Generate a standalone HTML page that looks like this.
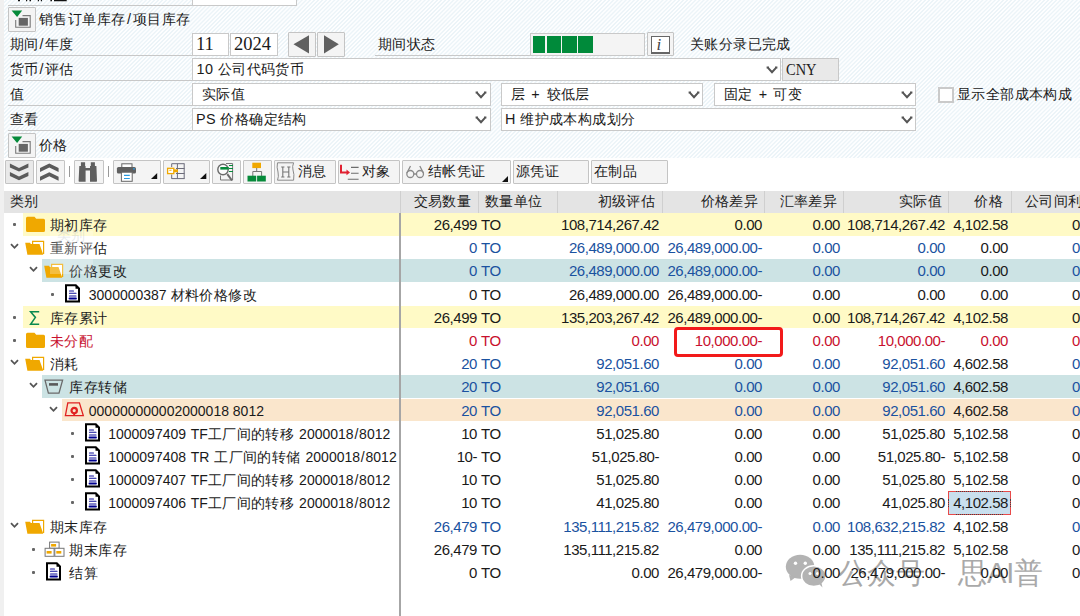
<!DOCTYPE html>
<html><head><meta charset="utf-8">
<style>
*{margin:0;padding:0;box-sizing:border-box}
html,body{width:1080px;height:616px;overflow:hidden}
body{position:relative;background:#fff;font-family:"Liberation Sans",sans-serif;color:#1a1a1a}
.abs,.t,.bg,.ic,.bul,.box,.ln,.btn{position:absolute}
.t{white-space:nowrap;line-height:23px;font-size:14px}
.lbl{font-size:14px;font-weight:400}
.bg{left:0;right:0}
.bul{width:3px;height:3px;background:#666;border-radius:1px}
.stripe{position:absolute;left:4px;top:0;width:1076px;height:158px;background:repeating-linear-gradient(135deg,#fdfeff 0px,#fdfeff 1.0px,#ecf4f8 1.5px,#ecf4f8 2.4px,#fdfeff 2.9px)}
.strip{position:absolute;left:0;top:0;width:4px;height:616px;background:#f0f0f0}
.ln{height:1px;background:#c8c8c8}
.box{background:#fff;border:1px solid #c9c9c9}
.btn{background:#f4f4f4;border:1px solid #c4c4c4;border-radius:1px}
.ft{position:absolute;white-space:nowrap;font-size:14.4px;line-height:22px;font-weight:350;letter-spacing:.4px}
.chev{position:absolute}
.hdr{position:absolute;left:4px;top:191px;width:1076px;height:22px;background:#e4e4e4}
.hs{position:absolute;top:191px;width:1px;height:22px;background:#cfcfcf}
.ht{position:absolute;top:189.5px;line-height:22px;font-size:14.4px;white-space:nowrap;color:#222;font-weight:350;letter-spacing:.3px}
.r{text-align:right}
.c{letter-spacing:.4px;font-size:14.4px}
.d{font-size:15px;letter-spacing:-.45px}
</style></head><body>
<div class="stripe"></div>
<div class="strip"></div>

<!-- top partial row -->
<svg class="ic" style="left:0;top:0" width="80" height="3" viewBox="0 0 80 3"><path d="M18 0H20V1.2H18Z M26 0H27.2V1.2H26Z M29.5 0H31V1.2H29.5Z M37.8 0H39V1.2H37.8Z M40.8 0H42V1.2H40.8Z M50.4 0H52V1.2H50.4Z M54 0H66.7V1.3H54Z" fill="#111"/></svg>
<div class="ln" style="left:8px;top:5px;width:184px"></div>
<div class="box" style="left:192px;top:-10px;width:105px;height:16px"></div>

<!-- button row 1 -->
<div class="btn" style="left:8px;top:7px;width:28px;height:25px"></div>
<svg class="ic" style="left:8px;top:7px" width="28" height="25" viewBox="0 0 28 25"><path d="M14.5 8.6 H22.2 V20.3 H7.7 V13" fill="none" stroke="#7a7a7a" stroke-width="1.1"/><rect x="10.7" y="10.9" width="9.2" height="7.8" fill="#666"/><path d="M3.6 3.6 H14.2 L9.1 10Z" fill="#068a3a"/></svg>
<div class="ft" style="left:39px;top:8px">销售订单库存<span style="margin:0 1.5px">/</span>项目库存</div>

<!-- row 期间/年度 -->
<div class="ft" style="left:10px;top:33px">期间<span style="margin:0 .7px">/</span>年度</div>
<div class="ln" style="left:8px;top:55px;width:184px"></div>
<div class="box" style="left:192px;top:33px;width:37px;height:23px"></div>
<div class="box" style="left:230px;top:33px;width:48px;height:23px"></div>
<div class="t" style="left:196px;top:33px;font-family:'Liberation Serif',serif;font-size:18.5px;line-height:23px">11</div>
<div class="t" style="left:234px;top:33px;font-family:'Liberation Serif',serif;font-size:18.5px;line-height:23px">2024</div>
<div class="btn" style="left:288px;top:32px;width:28px;height:25px"></div>
<div class="btn" style="left:317px;top:32px;width:28px;height:25px"></div>
<svg class="ic" style="left:293px;top:35px" width="20" height="19" viewBox="0 0 20 19"><path d="M16 0.2 V18.4 L0.5 9.3Z" fill="#606060"/></svg>
<svg class="ic" style="left:323px;top:35px" width="20" height="19" viewBox="0 0 20 19"><path d="M1 0.2 V18.4 L15.8 9.3Z" fill="#606060"/></svg>
<div class="ft" style="left:378px;top:33px">期间状态</div>
<div class="ln" style="left:375px;top:55px;width:155px"></div>
<div class="box" style="left:530px;top:33px;width:115px;height:23px;background:#f4f4f4"></div>
<div class="abs" style="left:533px;top:36px;width:12px;height:17px;background:#008a3a"></div>
<div class="abs" style="left:546.5px;top:36px;width:14.5px;height:17px;background:#008a3a"></div>
<div class="abs" style="left:562px;top:36px;width:15px;height:17px;background:#008a3a"></div>
<div class="abs" style="left:578px;top:36px;width:14.5px;height:17px;background:#008a3a"></div>
<div class="btn" style="left:647px;top:32px;width:27px;height:24px"></div>
<div class="abs" style="left:651px;top:36px;width:19px;height:18px;border:1px solid #666;border-right-width:1.5px;border-bottom-width:2px;background:#fff"></div>
<div class="t" style="left:656.5px;top:33px;font-family:'Liberation Serif',serif;font-style:italic;font-size:17px;color:#444">i</div>
<div class="ft" style="left:690px;top:33px">关账分录已完成</div>

<!-- row 货币/评估 -->
<div class="ft" style="left:10px;top:58px">货币<span style="margin:0 .7px">/</span>评估</div>
<div class="ln" style="left:8px;top:80px;width:184px"></div>
<div class="box" style="left:192px;top:58px;width:589px;height:23px"></div>
<div class="ft" style="left:196.5px;top:58px">10 公司代码货币</div>
<div class="box" style="left:782px;top:58px;width:57px;height:23px;background:#e9e9e9"></div>
<div class="t" style="left:786px;top:58px;font-family:'Liberation Serif',serif;font-size:17px;color:#222;transform:scaleX(.85);transform-origin:left">CNY</div>

<!-- row 值 -->
<div class="ft" style="left:10px;top:83px">值</div>
<div class="ln" style="left:8px;top:105px;width:184px"></div>
<div class="box" style="left:192px;top:83px;width:299px;height:23px"></div>
<div class="ft" style="left:202px;top:83px">实际值</div>
<div class="box" style="left:501px;top:83px;width:202px;height:23px"></div>
<div class="ft" style="left:510.5px;top:83px;word-spacing:2px">层 + 较低层</div>
<div class="box" style="left:714px;top:83px;width:202px;height:23px"></div>
<div class="ft" style="left:724px;top:83px;word-spacing:1.5px">固定 + 可变</div>
<div class="abs" style="left:938px;top:87px;width:16px;height:16px;border:2px solid #cacaca;background:#fff"></div>
<div class="ft" style="left:957px;top:83px">显示全部成本构成</div>

<!-- row 查看 -->
<div class="ft" style="left:10px;top:108px">查看</div>
<div class="ln" style="left:8px;top:130px;width:184px"></div>
<div class="box" style="left:192px;top:108px;width:299px;height:23px"></div>
<div class="ft" style="left:196px;top:108px">PS 价格确定结构</div>
<div class="box" style="left:501px;top:108px;width:415px;height:23px"></div>
<div class="ft" style="left:505px;top:108px">H 维护成本构成划分</div>

<!-- chevrons -->
<svg class="chev" style="left:765.5px;top:65.5px" width="12" height="8" viewBox="0 0 12 8"><path d="M0.6 1.4 H3 M9 1.4 H11.4 M1.8 1.6 L6 6.2 L10.2 1.6" fill="none" stroke="#555" stroke-width="2"/></svg>
<svg class="chev" style="left:474.5px;top:90.5px" width="12" height="8" viewBox="0 0 12 8"><path d="M0.6 1.4 H3 M9 1.4 H11.4 M1.8 1.6 L6 6.2 L10.2 1.6" fill="none" stroke="#555" stroke-width="2"/></svg>
<svg class="chev" style="left:687.5px;top:90.5px" width="12" height="8" viewBox="0 0 12 8"><path d="M0.6 1.4 H3 M9 1.4 H11.4 M1.8 1.6 L6 6.2 L10.2 1.6" fill="none" stroke="#555" stroke-width="2"/></svg>
<svg class="chev" style="left:900.5px;top:90.5px" width="12" height="8" viewBox="0 0 12 8"><path d="M0.6 1.4 H3 M9 1.4 H11.4 M1.8 1.6 L6 6.2 L10.2 1.6" fill="none" stroke="#555" stroke-width="2"/></svg>
<svg class="chev" style="left:474.5px;top:115.5px" width="12" height="8" viewBox="0 0 12 8"><path d="M0.6 1.4 H3 M9 1.4 H11.4 M1.8 1.6 L6 6.2 L10.2 1.6" fill="none" stroke="#555" stroke-width="2"/></svg>
<svg class="chev" style="left:900.5px;top:115.5px" width="12" height="8" viewBox="0 0 12 8"><path d="M0.6 1.4 H3 M9 1.4 H11.4 M1.8 1.6 L6 6.2 L10.2 1.6" fill="none" stroke="#555" stroke-width="2"/></svg>

<!-- button row 价格 -->
<div class="btn" style="left:8px;top:133px;width:28px;height:25px"></div>
<svg class="ic" style="left:8px;top:133px" width="28" height="25" viewBox="0 0 28 25"><path d="M14.5 8.6 H22.2 V20.3 H7.7 V13" fill="none" stroke="#7a7a7a" stroke-width="1.1"/><rect x="10.7" y="10.9" width="9.2" height="7.8" fill="#666"/><path d="M3.6 3.6 H14.2 L9.1 10Z" fill="#068a3a"/></svg>
<div class="ft" style="left:39px;top:134px">价格</div>

<!-- toolbar -->
<div class="btn" style="left:5px;top:160px;width:29px;height:24px;background:#e9e9e9"></div>
<div class="btn" style="left:36px;top:160px;width:29px;height:24px"></div>
<div class="abs" style="left:69px;top:166px;width:1px;height:11px;background:#999"></div>
<div class="btn" style="left:74px;top:160px;width:30px;height:24px"></div>
<div class="abs" style="left:108px;top:166px;width:1px;height:11px;background:#999"></div>
<div class="btn" style="left:113px;top:160px;width:48px;height:24px"></div>
<div class="btn" style="left:163px;top:160px;width:47px;height:24px"></div>
<div class="btn" style="left:212px;top:160px;width:29px;height:24px"></div>
<div class="btn" style="left:243px;top:160px;width:29px;height:24px"></div>
<div class="btn" style="left:274px;top:160px;width:62px;height:24px"></div>
<div class="btn" style="left:338px;top:160px;width:62px;height:24px"></div>
<div class="btn" style="left:402px;top:160px;width:109px;height:24px"></div>
<div class="btn" style="left:513px;top:160px;width:76px;height:24px"></div>
<div class="btn" style="left:591px;top:160px;width:77px;height:24px"></div>
<!-- toolbar icons -->
<svg class="ic" style="left:0;top:156px" width="70" height="30" viewBox="0 156 70 30"><path d="M9.9 163.6 L19 168 L28.4 163.6 V167.6 L19 171.6 L9.9 167.6Z M9.9 172.1 L19 176.5 L28.4 172.1 V176.1 L19 180.3 L9.9 176.1Z" fill="#5a5a5a"/><path d="M40 168 L49.3 163.6 L58.6 168 V172 L49.3 167.6 L40 172Z M40 176.7 L49.3 172.3 L58.6 176.7 V180.7 L49.3 176.3 L40 180.7Z" fill="#5a5a5a"/></svg>
<svg class="ic" style="left:78px;top:162px" width="20" height="20" viewBox="0 0 20 20"><path d="M2.9 0.2 H7.1 V4 H7.6 V19.7 H1.3 Q0.6 19.7 0.6 19 L1.3 4 H2.9Z M12.8 0.2 H16.9 V4 H18.4 L19 19 Q19 19.7 18.4 19.7 H12 V4 H12.8Z M7.6 6 H12 V8.5 H7.6Z" fill="#5f5f5f"/></svg>
<svg class="ic" style="left:110px;top:156px" width="104" height="30" viewBox="110 156 104 30"><rect x="121.8" y="163.8" width="10.2" height="4" fill="#fff" stroke="#666" stroke-width="1"/><rect x="116.9" y="167" width="19.1" height="6.5" rx="1.6" fill="#606060"/><circle cx="134" cy="168.8" r=".9" fill="#2a9ae0"/><rect x="121.4" y="172.2" width="10.8" height="9.1" fill="#fff" stroke="#666" stroke-width="1"/><path d="M124 175.4H129.8M124 178.5H129.8" stroke="#2a9ae0" stroke-width="1.2"/><path d="M157.2 172.9 V178.9 H151Z" fill="#111"/>
<path d="M177.4 163.7 V178.8 M184.2 163.7 V178.8 M171.7 163.7 V167 M171.7 174.5 V178.8 M171.7 163.7 H184.5 M176 168.5 H184.5 M176 173.5 H184.5 M171.7 178.6 H184.5" stroke="#6c6c7a" stroke-width="1"/><rect x="167.6" y="168.3" width="6.2" height="5.3" fill="#fff" stroke="#f0a800" stroke-width="1.3"/><path d="M169.3 170.3 H171.5" stroke="#f0a800" stroke-width=".9"/><rect x="173.8" y="169.4" width="4.2" height="2.8" fill="#f0a800"/><path d="M206.3 173 V179 H200Z" fill="#111"/></svg>
<svg class="ic" style="left:208px;top:156px" width="104" height="30" viewBox="208 156 104 30"><path d="M226 163.5 H232.6 V180 H220.5 V175.5" fill="none" stroke="#777" stroke-width="1"/><path d="M229 165.5 H233 M229 168.5 H233 M229 171.5 H233" stroke="#068a3a" stroke-width="1.1"/><circle cx="223" cy="169.5" r="5.2" fill="#fff" fill-opacity=".6" stroke="#6a6a6a" stroke-width="1.4"/><rect x="220.3" y="167" width="8.4" height="2.6" fill="#068a3a"/><path d="M227.3 174.2 L232 180.5" stroke="#6a6a6a" stroke-width="2"/>
<rect x="252.3" y="162.7" width="8.7" height="5.4" fill="#f0a800"/><path d="M256.7 168 V171.5 M252.8 176 V171.5 H261.6 V176" fill="none" stroke="#777" stroke-width="1"/><rect x="247.5" y="175.7" width="8.7" height="5.8" fill="#068a3a"/><rect x="257.1" y="175.7" width="8.7" height="5.8" fill="#068a3a"/>
<path d="M277.5 162.8 H293.6 Q292 166.5 293 170 Q294.5 174 293.6 180.2 H277.5 Q279 176.5 278 172 Q276.5 167 277.5 162.8Z" fill="none" stroke="#8a8a8a" stroke-width="1"/><path d="M282.8 167 V177 M288.8 167 V177 M282.8 172 H288.8 M281.2 167 H284.4 M287.2 167 H290.4 M281.2 177 H284.4 M287.2 177 H290.4" stroke="#757575" stroke-width="1.1"/></svg>
<div class="t" style="left:298px;top:159px;font-size:14.4px;line-height:24px;font-weight:350;letter-spacing:.4px">消息</div>
<svg class="ic" style="left:334px;top:156px" width="104" height="30" viewBox="334 156 104 30"><path d="M341 164.7 V172.4 H347" fill="none" stroke="#e02030" stroke-width="2"/><path d="M346.5 169.6 L350 172.4 L346.5 175.2Z" fill="#e02030"/><path d="M351 167.4 H358.6 M351 173.3 H358.6 M347.8 179.3 H358.6" stroke="#6c6c6c" stroke-width="1.1"/>
<circle cx="410.3" cy="174" r="3.5" fill="none" stroke="#8a8a8a" stroke-width="1.3"/><circle cx="420" cy="174" r="3.5" fill="none" stroke="#8a8a8a" stroke-width="1.3"/><path d="M406.9 173 L410.5 166 M423.4 173 L419.8 166 M413.8 174 H416.5" fill="none" stroke="#8a8a8a" stroke-width="1.3"/></svg>
<div class="t" style="left:362px;top:159px;font-size:14.4px;line-height:24px;font-weight:350;letter-spacing:.4px">对象</div>
<div class="t" style="left:428px;top:159px;font-size:14.4px;line-height:24px;font-weight:350;letter-spacing:.4px">结帐凭证</div>
<svg class="ic" style="left:502px;top:176px" width="6" height="6" viewBox="0 0 6 6"><path d="M6 0V6H0Z" fill="#111"/></svg>
<div class="t" style="left:516px;top:159px;font-size:14.4px;line-height:24px;font-weight:350;letter-spacing:.4px">源凭证</div>
<div class="t" style="left:594px;top:159px;font-size:14.4px;line-height:24px;font-weight:350;letter-spacing:.4px">在制品</div>

<!-- header -->
<div class="hdr"></div>
<div class="ht" style="left:10px">类别</div>
<div class="hs" style="left:400px"></div>
<div class="hs" style="left:478px"></div>
<div class="hs" style="left:557px"></div>
<div class="hs" style="left:662px"></div>
<div class="hs" style="left:764px"></div>
<div class="hs" style="left:843px"></div>
<div class="hs" style="left:948px"></div>
<div class="hs" style="left:1011px"></div>
<div class="ht r" style="right:609px">交易数量</div>
<div class="ht" style="left:485px">数量单位</div>
<div class="ht r" style="right:425px">初级评估</div>
<div class="ht r" style="right:322px">价格差异</div>
<div class="ht r" style="right:243px">汇率差异</div>
<div class="ht r" style="right:138px">实际值</div>
<div class="ht r" style="right:77px">价格</div>
<div class="ht" style="left:1025px">公司间利润</div>

<!-- watermark -->
<svg class="ic" style="left:780px;top:550px" width="50" height="40" viewBox="0 0 50 40"><ellipse cx="20.1" cy="16.8" rx="14.3" ry="12" fill="#b3b3b3"/><path d="M9 25 L10.5 31 L16 27Z" fill="#b3b3b3"/><circle cx="15.5" cy="13.3" r="1.7" fill="#fff"/><circle cx="25.3" cy="13.3" r="1.7" fill="#fff"/><ellipse cx="33.8" cy="26.1" rx="12.2" ry="10.4" fill="#b3b3b3" stroke="#fff" stroke-width="1.5"/><path d="M38 33 L42.5 37.5 L41 31Z" fill="#b3b3b3"/><circle cx="30" cy="23.4" r="1.5" fill="#fff"/><circle cx="37.5" cy="23.4" r="1.5" fill="#fff"/></svg>
<div class="t" style="left:838px;top:557px;font-size:29px;line-height:33px;color:#a9a9a9;font-weight:350">公众号</div>
<div class="t" style="left:958px;top:557px;font-size:29px;line-height:33px;color:#a9a9a9;font-weight:350">思AI普</div>
<div class="bg" style="left:23.0px;top:213px;height:23px;background:#fffac6"></div>
<div class="bul" style="left:12.6px;top:223px"></div>
<svg class="ic" style="left:25.0px;top:215px" width="22" height="20" viewBox="0 0 22 20"><path d="M1 3.2 Q1 1.7 2.5 1.7 H9.5 L11.2 3.8 H18.5 Q20 3.8 20 5.3 V15.4 Q20 16.9 18.5 16.9 H2.5 Q1 16.9 1 15.4 Z" fill="#f0a800"/></svg>
<div class="t lbl" style="left:50.0px;top:213.5px;color:#1a1a1a"><span class="c">期初库存</span></div>
<div class="t d r" style="right:603px;top:213px;color:#1a1a1a">26,499</div>
<div class="t d" style="left:481px;top:213px;color:#1a1a1a">TO</div>
<div class="t d r" style="right:421px;top:213px;color:#1a1a1a">108,714,267.42</div>
<div class="t d r" style="right:318px;top:213px;color:#1a1a1a">0.00</div>
<div class="t d r" style="right:240px;top:213px;color:#1a1a1a">0.00</div>
<div class="t d r" style="right:135px;top:213px;color:#1a1a1a">108,714,267.42</div>
<div class="t d r" style="right:72px;top:213px;color:#1a1a1a">4,102.58</div>
<div class="t d r" style="right:0px;top:213px;color:#1a1a1a">0</div>
<svg class="ic" style="left:10.0px;top:243px" width="9" height="7" viewBox="0 0 9 7"><path d="M1 1.2 L4.5 4.8 L8 1.2" fill="none" stroke="#555" stroke-width="1.8"/></svg>
<svg class="ic" style="left:25.0px;top:238px" width="22" height="20" viewBox="0 0 22 20"><path d="M7.6 14 V3.4 H18.6 V16" fill="#fff" stroke="#f0a800" stroke-width="1.2"/><path d="M0.2 4.8 H5 L5.8 6 H14.5 L18.3 16.8 H2.4 Z" fill="#f0a800"/></svg>
<div class="t lbl" style="left:50.0px;top:236.5px;color:#1a1a1a"><span class="c">重新评估</span></div>
<div class="t d r" style="right:603px;top:236px;color:#1a52a0">0</div>
<div class="t d" style="left:481px;top:236px;color:#1a52a0">TO</div>
<div class="t d r" style="right:421px;top:236px;color:#1a52a0">26,489,000.00</div>
<div class="t d r" style="right:318px;top:236px;color:#1a52a0">26,489,000.00-</div>
<div class="t d r" style="right:240px;top:236px;color:#1a52a0">0.00</div>
<div class="t d r" style="right:135px;top:236px;color:#1a52a0">0.00</div>
<div class="t d r" style="right:72px;top:236px;color:#1a1a1a">0.00</div>
<div class="t d r" style="right:0px;top:236px;color:#1a52a0">0</div>
<div class="bg" style="left:42.4px;top:259px;height:23px;background:#cce3e4"></div>
<svg class="ic" style="left:29.4px;top:266px" width="9" height="7" viewBox="0 0 9 7"><path d="M1 1.2 L4.5 4.8 L8 1.2" fill="none" stroke="#555" stroke-width="1.8"/></svg>
<svg class="ic" style="left:44.4px;top:261px" width="22" height="20" viewBox="0 0 22 20"><path d="M7.6 14 V3.4 H18.6 V16" fill="#fff" stroke="#f0a800" stroke-width="1.2"/><path d="M0.2 4.8 H5 L5.8 6 H14.5 L18.3 16.8 H2.4 Z" fill="#f0a800"/></svg>
<div class="t lbl" style="left:69.4px;top:259.5px;color:#1a1a1a"><span class="c">价格更改</span></div>
<div class="t d r" style="right:603px;top:259px;color:#1a52a0">0</div>
<div class="t d" style="left:481px;top:259px;color:#1a52a0">TO</div>
<div class="t d r" style="right:421px;top:259px;color:#1a52a0">26,489,000.00</div>
<div class="t d r" style="right:318px;top:259px;color:#1a52a0">26,489,000.00-</div>
<div class="t d r" style="right:240px;top:259px;color:#1a52a0">0.00</div>
<div class="t d r" style="right:135px;top:259px;color:#1a52a0">0.00</div>
<div class="t d r" style="right:72px;top:259px;color:#1a1a1a">0.00</div>
<div class="t d r" style="right:0px;top:259px;color:#1a52a0">0</div>
<div class="bul" style="left:51.4px;top:293px"></div>
<svg class="ic" style="left:65.1px;top:284px" width="17" height="20" viewBox="0 0 17 20"><path d="M1 1.2 H10.8 L14 4.4 V17.5 H1Z" fill="#fff" stroke="#000" stroke-width="2"/><path d="M10.5 1 V4.8 H14.2Z" fill="#000"/><path d="M4.5 7H8.5M4.5 9.2H11M4.5 12H11" stroke="#10109a" stroke-width="1.1" stroke-linecap="round"/><path d="M4.5 14.5H11" stroke="#000090" stroke-width="1.8" stroke-linecap="round"/></svg>
<div class="t lbl" style="left:88.8px;top:283.5px;color:#1a1a1a">3000000387 <span class="c">材料价格修改</span></div>
<div class="t d r" style="right:603px;top:283px;color:#1a1a1a">0</div>
<div class="t d" style="left:481px;top:283px;color:#1a1a1a">TO</div>
<div class="t d r" style="right:421px;top:283px;color:#1a1a1a">26,489,000.00</div>
<div class="t d r" style="right:318px;top:283px;color:#1a1a1a">26,489,000.00-</div>
<div class="t d r" style="right:240px;top:283px;color:#1a1a1a">0.00</div>
<div class="t d r" style="right:135px;top:283px;color:#1a1a1a">0.00</div>
<div class="t d r" style="right:72px;top:283px;color:#1a1a1a">0.00</div>
<div class="t d r" style="right:0px;top:283px;color:#1a1a1a">0</div>
<div class="bg" style="left:23.0px;top:306px;height:22px;background:#fffac6"></div>
<div class="bul" style="left:12.6px;top:316px"></div>
<svg class="ic" style="left:25.0px;top:308px" width="22" height="20" viewBox="0 0 22 20"><path d="M14.2 3.7 H5.6 L10.4 9.4 L5.6 16.2 H14.2" fill="none" stroke="#0a8a50" stroke-width="1.5"/></svg>
<div class="t lbl" style="left:50.0px;top:306.5px;color:#1a1a1a"><span class="c">库存累计</span></div>
<div class="t d r" style="right:603px;top:306px;color:#1a1a1a">26,499</div>
<div class="t d" style="left:481px;top:306px;color:#1a1a1a">TO</div>
<div class="t d r" style="right:421px;top:306px;color:#1a1a1a">135,203,267.42</div>
<div class="t d r" style="right:318px;top:306px;color:#1a1a1a">26,489,000.00-</div>
<div class="t d r" style="right:240px;top:306px;color:#1a1a1a">0.00</div>
<div class="t d r" style="right:135px;top:306px;color:#1a1a1a">108,714,267.42</div>
<div class="t d r" style="right:72px;top:306px;color:#1a1a1a">4,102.58</div>
<div class="t d r" style="right:0px;top:306px;color:#1a1a1a">0</div>
<div class="bul" style="left:12.6px;top:339px"></div>
<svg class="ic" style="left:25.0px;top:331px" width="22" height="20" viewBox="0 0 22 20"><path d="M1 3.2 Q1 1.7 2.5 1.7 H9.5 L11.2 3.8 H18.5 Q20 3.8 20 5.3 V15.4 Q20 16.9 18.5 16.9 H2.5 Q1 16.9 1 15.4 Z" fill="#f0a800"/></svg>
<div class="t lbl" style="left:50.0px;top:329.5px;color:#c8102e"><span class="c">未分配</span></div>
<div class="t d r" style="right:603px;top:329px;color:#c8102e">0</div>
<div class="t d" style="left:481px;top:329px;color:#c8102e">TO</div>
<div class="t d r" style="right:421px;top:329px;color:#c8102e">0.00</div>
<div class="t d r" style="right:318px;top:329px;color:#c8102e">10,000.00-</div>
<div class="t d r" style="right:240px;top:329px;color:#c8102e">0.00</div>
<div class="t d r" style="right:135px;top:329px;color:#c8102e">10,000.00-</div>
<div class="t d r" style="right:72px;top:329px;color:#c8102e">0.00</div>
<div class="t d r" style="right:0px;top:329px;color:#c8102e">0</div>
<svg class="ic" style="left:10.0px;top:359px" width="9" height="7" viewBox="0 0 9 7"><path d="M1 1.2 L4.5 4.8 L8 1.2" fill="none" stroke="#555" stroke-width="1.8"/></svg>
<svg class="ic" style="left:25.0px;top:354px" width="22" height="20" viewBox="0 0 22 20"><path d="M7.6 14 V3.4 H18.6 V16" fill="#fff" stroke="#f0a800" stroke-width="1.2"/><path d="M0.2 4.8 H5 L5.8 6 H14.5 L18.3 16.8 H2.4 Z" fill="#f0a800"/></svg>
<div class="t lbl" style="left:50.0px;top:352.5px;color:#1a1a1a"><span class="c">消耗</span></div>
<div class="t d r" style="right:603px;top:352px;color:#1a52a0">20</div>
<div class="t d" style="left:481px;top:352px;color:#1a52a0">TO</div>
<div class="t d r" style="right:421px;top:352px;color:#1a52a0">92,051.60</div>
<div class="t d r" style="right:318px;top:352px;color:#1a52a0">0.00</div>
<div class="t d r" style="right:240px;top:352px;color:#1a52a0">0.00</div>
<div class="t d r" style="right:135px;top:352px;color:#1a52a0">92,051.60</div>
<div class="t d r" style="right:72px;top:352px;color:#1a1a1a">4,602.58</div>
<div class="t d r" style="right:0px;top:352px;color:#1a52a0">0</div>
<div class="bg" style="left:42.4px;top:375px;height:23px;background:#cce3e4"></div>
<svg class="ic" style="left:29.4px;top:382px" width="9" height="7" viewBox="0 0 9 7"><path d="M1 1.2 L4.5 4.8 L8 1.2" fill="none" stroke="#555" stroke-width="1.8"/></svg>
<svg class="ic" style="left:44.4px;top:377px" width="22" height="20" viewBox="0 0 22 20"><path d="M1 3.2 H18.6 L15 16.2 H4.4Z" fill="none" stroke="#6a6a6a" stroke-width="1.3"/><path d="M5 7.4 H14" stroke="#5a5a5a" stroke-width="2.6"/></svg>
<div class="t lbl" style="left:69.4px;top:375.5px;color:#1a1a1a"><span class="c">库存转储</span></div>
<div class="t d r" style="right:603px;top:375px;color:#1a52a0">20</div>
<div class="t d" style="left:481px;top:375px;color:#1a52a0">TO</div>
<div class="t d r" style="right:421px;top:375px;color:#1a52a0">92,051.60</div>
<div class="t d r" style="right:318px;top:375px;color:#1a52a0">0.00</div>
<div class="t d r" style="right:240px;top:375px;color:#1a52a0">0.00</div>
<div class="t d r" style="right:135px;top:375px;color:#1a52a0">92,051.60</div>
<div class="t d r" style="right:72px;top:375px;color:#1a1a1a">4,602.58</div>
<div class="t d r" style="right:0px;top:375px;color:#1a52a0">0</div>
<div class="bg" style="left:61.8px;top:399px;height:22px;background:#fae6cc"></div>
<svg class="ic" style="left:48.8px;top:406px" width="9" height="7" viewBox="0 0 9 7"><path d="M1 1.2 L4.5 4.8 L8 1.2" fill="none" stroke="#555" stroke-width="1.8"/></svg>
<svg class="ic" style="left:63.8px;top:401px" width="22" height="20" viewBox="0 0 22 20"><path d="M3.8 1.8 H15.4 L19.3 14.6 H1.4Z" fill="none" stroke="#e02020" stroke-width="1.3"/><circle cx="10.2" cy="9.6" r="2.7" fill="none" stroke="#e02020" stroke-width="2.2"/><path d="M10.2 12 V14" stroke="#e02020" stroke-width="1.8"/></svg>
<div class="t lbl" style="left:88.8px;top:399.5px;color:#1a1a1a">000000000002000018 8012</div>
<div class="t d r" style="right:603px;top:399px;color:#1a52a0">20</div>
<div class="t d" style="left:481px;top:399px;color:#1a52a0">TO</div>
<div class="t d r" style="right:421px;top:399px;color:#1a52a0">92,051.60</div>
<div class="t d r" style="right:318px;top:399px;color:#1a52a0">0.00</div>
<div class="t d r" style="right:240px;top:399px;color:#1a52a0">0.00</div>
<div class="t d r" style="right:135px;top:399px;color:#1a52a0">92,051.60</div>
<div class="t d r" style="right:72px;top:399px;color:#1a1a1a">4,602.58</div>
<div class="t d r" style="right:0px;top:399px;color:#1a52a0">0</div>
<div class="bul" style="left:70.8px;top:432px"></div>
<svg class="ic" style="left:84.49999999999999px;top:423px" width="17" height="20" viewBox="0 0 17 20"><path d="M1 1.2 H10.8 L14 4.4 V17.5 H1Z" fill="#fff" stroke="#000" stroke-width="2"/><path d="M10.5 1 V4.8 H14.2Z" fill="#000"/><path d="M4.5 7H8.5M4.5 9.2H11M4.5 12H11" stroke="#10109a" stroke-width="1.1" stroke-linecap="round"/><path d="M4.5 14.5H11" stroke="#000090" stroke-width="1.8" stroke-linecap="round"/></svg>
<div class="t lbl" style="left:108.19999999999999px;top:422.5px;color:#1a1a1a;word-spacing:1px">1000097409 TF<span class="c">工厂间的转移</span> 2000018<span style="margin:0 .8px">/</span>8012</div>
<div class="t d r" style="right:603px;top:422px;color:#1a1a1a">10</div>
<div class="t d" style="left:481px;top:422px;color:#1a1a1a">TO</div>
<div class="t d r" style="right:421px;top:422px;color:#1a1a1a">51,025.80</div>
<div class="t d r" style="right:318px;top:422px;color:#1a1a1a">0.00</div>
<div class="t d r" style="right:240px;top:422px;color:#1a1a1a">0.00</div>
<div class="t d r" style="right:135px;top:422px;color:#1a1a1a">51,025.80</div>
<div class="t d r" style="right:72px;top:422px;color:#1a1a1a">5,102.58</div>
<div class="t d r" style="right:0px;top:422px;color:#1a1a1a">0</div>
<div class="bul" style="left:70.8px;top:455px"></div>
<svg class="ic" style="left:84.49999999999999px;top:446px" width="17" height="20" viewBox="0 0 17 20"><path d="M1 1.2 H10.8 L14 4.4 V17.5 H1Z" fill="#fff" stroke="#000" stroke-width="2"/><path d="M10.5 1 V4.8 H14.2Z" fill="#000"/><path d="M4.5 7H8.5M4.5 9.2H11M4.5 12H11" stroke="#10109a" stroke-width="1.1" stroke-linecap="round"/><path d="M4.5 14.5H11" stroke="#000090" stroke-width="1.8" stroke-linecap="round"/></svg>
<div class="t lbl" style="left:108.19999999999999px;top:445.5px;color:#1a1a1a;word-spacing:1px">1000097408 TR <span class="c">工厂间的转储</span> 2000018<span style="margin:0 .8px">/</span>8012</div>
<div class="t d r" style="right:603px;top:445px;color:#1a1a1a">10-</div>
<div class="t d" style="left:481px;top:445px;color:#1a1a1a">TO</div>
<div class="t d r" style="right:421px;top:445px;color:#1a1a1a">51,025.80-</div>
<div class="t d r" style="right:318px;top:445px;color:#1a1a1a">0.00</div>
<div class="t d r" style="right:240px;top:445px;color:#1a1a1a">0.00</div>
<div class="t d r" style="right:135px;top:445px;color:#1a1a1a">51,025.80-</div>
<div class="t d r" style="right:72px;top:445px;color:#1a1a1a">5,102.58</div>
<div class="t d r" style="right:0px;top:445px;color:#1a1a1a">0</div>
<div class="bul" style="left:70.8px;top:478px"></div>
<svg class="ic" style="left:84.49999999999999px;top:469px" width="17" height="20" viewBox="0 0 17 20"><path d="M1 1.2 H10.8 L14 4.4 V17.5 H1Z" fill="#fff" stroke="#000" stroke-width="2"/><path d="M10.5 1 V4.8 H14.2Z" fill="#000"/><path d="M4.5 7H8.5M4.5 9.2H11M4.5 12H11" stroke="#10109a" stroke-width="1.1" stroke-linecap="round"/><path d="M4.5 14.5H11" stroke="#000090" stroke-width="1.8" stroke-linecap="round"/></svg>
<div class="t lbl" style="left:108.19999999999999px;top:468.5px;color:#1a1a1a;word-spacing:1px">1000097407 TF<span class="c">工厂间的转移</span> 2000018<span style="margin:0 .8px">/</span>8012</div>
<div class="t d r" style="right:603px;top:468px;color:#1a1a1a">10</div>
<div class="t d" style="left:481px;top:468px;color:#1a1a1a">TO</div>
<div class="t d r" style="right:421px;top:468px;color:#1a1a1a">51,025.80</div>
<div class="t d r" style="right:318px;top:468px;color:#1a1a1a">0.00</div>
<div class="t d r" style="right:240px;top:468px;color:#1a1a1a">0.00</div>
<div class="t d r" style="right:135px;top:468px;color:#1a1a1a">51,025.80</div>
<div class="t d r" style="right:72px;top:468px;color:#1a1a1a">5,102.58</div>
<div class="t d r" style="right:0px;top:468px;color:#1a1a1a">0</div>
<div class="abs" style="left:948px;top:491px;width:63px;height:24px;background:#c9dfee;border:1.5px solid #e84a4a"></div>
<div class="abs" style="left:956px;top:491px;width:47px;height:0;border-top:1.5px dotted #444"></div>
<div class="abs" style="left:956px;top:513.5px;width:47px;height:0;border-top:1.5px dotted #444"></div>
<div class="abs" style="left:948px;top:499px;width:0;height:8px;border-left:1.5px dotted #444"></div>
<div class="abs" style="left:1009.5px;top:499px;width:0;height:8px;border-left:1.5px dotted #444"></div>
<div class="bul" style="left:70.8px;top:501px"></div>
<svg class="ic" style="left:84.49999999999999px;top:492px" width="17" height="20" viewBox="0 0 17 20"><path d="M1 1.2 H10.8 L14 4.4 V17.5 H1Z" fill="#fff" stroke="#000" stroke-width="2"/><path d="M10.5 1 V4.8 H14.2Z" fill="#000"/><path d="M4.5 7H8.5M4.5 9.2H11M4.5 12H11" stroke="#10109a" stroke-width="1.1" stroke-linecap="round"/><path d="M4.5 14.5H11" stroke="#000090" stroke-width="1.8" stroke-linecap="round"/></svg>
<div class="t lbl" style="left:108.19999999999999px;top:491.5px;color:#1a1a1a;word-spacing:1px">1000097406 TF<span class="c">工厂间的转移</span> 2000018<span style="margin:0 .8px">/</span>8012</div>
<div class="t d r" style="right:603px;top:491px;color:#1a1a1a">10</div>
<div class="t d" style="left:481px;top:491px;color:#1a1a1a">TO</div>
<div class="t d r" style="right:421px;top:491px;color:#1a1a1a">41,025.80</div>
<div class="t d r" style="right:318px;top:491px;color:#1a1a1a">0.00</div>
<div class="t d r" style="right:240px;top:491px;color:#1a1a1a">0.00</div>
<div class="t d r" style="right:135px;top:491px;color:#1a1a1a">41,025.80</div>
<div class="t d r" style="right:72px;top:491px;color:#1a1a1a">4,102.58</div>
<div class="t d r" style="right:0px;top:491px;color:#1a1a1a">0</div>
<svg class="ic" style="left:10.0px;top:522px" width="9" height="7" viewBox="0 0 9 7"><path d="M1 1.2 L4.5 4.8 L8 1.2" fill="none" stroke="#555" stroke-width="1.8"/></svg>
<svg class="ic" style="left:25.0px;top:517px" width="22" height="20" viewBox="0 0 22 20"><path d="M7.6 14 V3.4 H18.6 V16" fill="#fff" stroke="#f0a800" stroke-width="1.2"/><path d="M0.2 4.8 H5 L5.8 6 H14.5 L18.3 16.8 H2.4 Z" fill="#f0a800"/></svg>
<div class="t lbl" style="left:50.0px;top:515.5px;color:#1a1a1a"><span class="c">期末库存</span></div>
<div class="t d r" style="right:603px;top:515px;color:#1a52a0">26,479</div>
<div class="t d" style="left:481px;top:515px;color:#1a52a0">TO</div>
<div class="t d r" style="right:421px;top:515px;color:#1a52a0">135,111,215.82</div>
<div class="t d r" style="right:318px;top:515px;color:#1a52a0">26,479,000.00-</div>
<div class="t d r" style="right:240px;top:515px;color:#1a52a0">0.00</div>
<div class="t d r" style="right:135px;top:515px;color:#1a52a0">108,632,215.82</div>
<div class="t d r" style="right:72px;top:515px;color:#1a1a1a">4,102.58</div>
<div class="t d r" style="right:0px;top:515px;color:#1a52a0">0</div>
<div class="bul" style="left:32.0px;top:548px"></div>
<svg class="ic" style="left:44.4px;top:540px" width="22" height="20" viewBox="0 0 22 20"><rect x="5.6" y="2.1" width="9.5" height="6.2" fill="#fff" stroke="#777" stroke-width="1"/><rect x="7.1" y="4" width="5" height="2.6" fill="#f0a800"/><rect x="1.1" y="8.3" width="9" height="8" fill="#fff" stroke="#777" stroke-width="1"/><rect x="2.6" y="11" width="5" height="2.6" fill="#f0a800"/><rect x="10.8" y="8.3" width="9.2" height="8" fill="#fff" stroke="#777" stroke-width="1"/><rect x="12.3" y="11" width="5" height="2.6" fill="#f0a800"/></svg>
<div class="t lbl" style="left:69.4px;top:538.5px;color:#1a1a1a"><span class="c">期末库存</span></div>
<div class="t d r" style="right:603px;top:538px;color:#1a1a1a">26,479</div>
<div class="t d" style="left:481px;top:538px;color:#1a1a1a">TO</div>
<div class="t d r" style="right:421px;top:538px;color:#1a1a1a">135,111,215.82</div>
<div class="t d r" style="right:318px;top:538px;color:#1a1a1a">0.00</div>
<div class="t d r" style="right:240px;top:538px;color:#1a1a1a">0.00</div>
<div class="t d r" style="right:135px;top:538px;color:#1a1a1a">135,111,215.82</div>
<div class="t d r" style="right:72px;top:538px;color:#1a1a1a">5,102.58</div>
<div class="t d r" style="right:0px;top:538px;color:#1a1a1a">0</div>
<div class="bul" style="left:32.0px;top:571px"></div>
<svg class="ic" style="left:45.699999999999996px;top:562px" width="17" height="20" viewBox="0 0 17 20"><path d="M1 1.2 H10.8 L14 4.4 V17.5 H1Z" fill="#fff" stroke="#000" stroke-width="2"/><path d="M10.5 1 V4.8 H14.2Z" fill="#000"/><path d="M4.5 7H8.5M4.5 9.2H11M4.5 12H11" stroke="#10109a" stroke-width="1.1" stroke-linecap="round"/><path d="M4.5 14.5H11" stroke="#000090" stroke-width="1.8" stroke-linecap="round"/></svg>
<div class="t lbl" style="left:69.4px;top:561.5px;color:#1a1a1a"><span class="c">结算</span></div>
<div class="t d r" style="right:603px;top:561px;color:#1a1a1a">0</div>
<div class="t d" style="left:481px;top:561px;color:#1a1a1a">TO</div>
<div class="t d r" style="right:421px;top:561px;color:#1a1a1a">0.00</div>
<div class="t d r" style="right:318px;top:561px;color:#1a1a1a">26,479,000.00-</div>
<div class="t d r" style="right:240px;top:561px;color:#1a1a1a">0.00</div>
<div class="t d r" style="right:135px;top:561px;color:#1a1a1a">26,479,000.00-</div>
<div class="t d r" style="right:72px;top:561px;color:#1a1a1a">0.00</div>
<div class="t d r" style="right:0px;top:561px;color:#1a1a1a">0</div>

<div class="abs" style="left:50px;top:231px;width:43px;height:43px;background:rgba(255,255,255,.25)"></div>
<div class="t" style="left:57px;top:224px;font-size:14.4px;color:rgba(170,180,190,.3);font-weight:350">类别</div>
<!-- tree/data separator -->
<div class="abs" style="left:399px;top:213px;width:2px;height:403px;background:#a6a6a6"></div>

<!-- red highlight box -->
<div class="abs" style="left:674px;top:326.5px;width:109px;height:30px;border:3px solid #f21a1a;border-radius:4px"></div>

</body></html>
